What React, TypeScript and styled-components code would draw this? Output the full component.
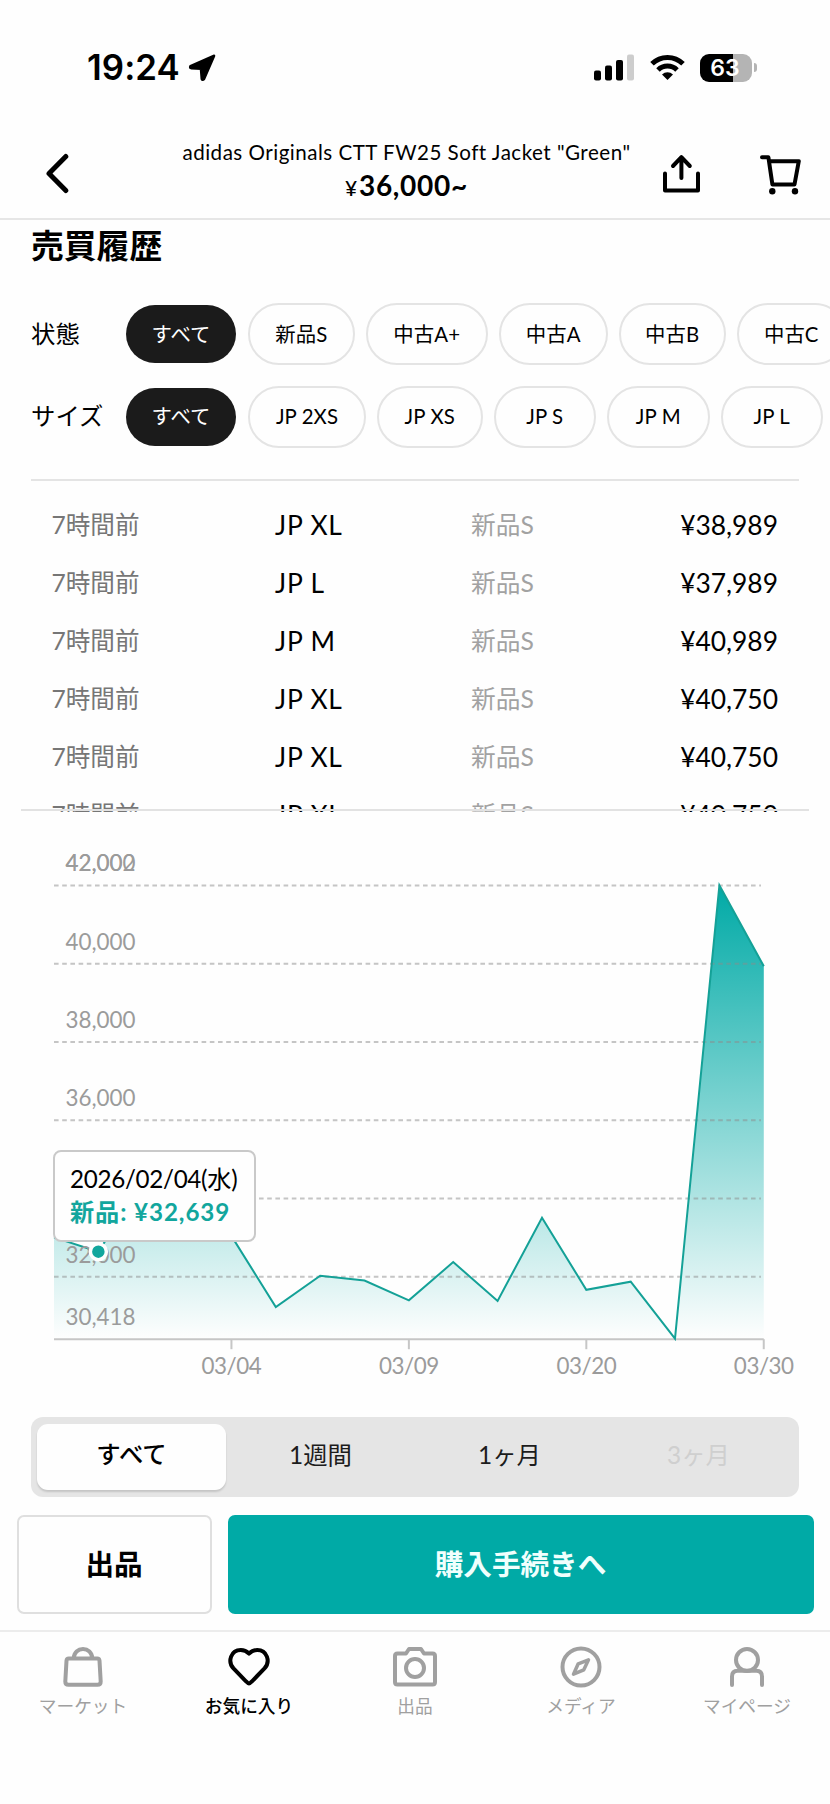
import React from "react";
import styled, { createGlobalStyle, css } from "styled-components";

const TEAL = "#00aaa6";
const GREY = "#9b9b9b";

const GlobalStyle = createGlobalStyle`
  * { box-sizing: border-box; }
  body {
    margin: 0;
    background: #fefefe;
    color: #000;
    font-family: Lato, "Noto Sans CJK JP", sans-serif;
  }
  button { font: inherit; color: inherit; background: none; border: 0; padding: 0; margin: 0; }
`;

const Screen = styled.div`
  width: 830px;
  height: 1804px;
  display: flex;
  flex-direction: column;
  overflow: hidden;
  background: #fefefe;
`;

/* Status bar */
const StatusBar = styled.div`
  height: 135px;
  flex: none;
  display: flex;
  align-items: center;
  justify-content: space-between;
  padding: 0 73px 0 87px;
`;
const Clock = styled.div`
  display: flex;
  align-items: center;
  gap: 8px;
  font: 600 34.8px/39px Inter, sans-serif;
  letter-spacing: 0.1px;
`;
const StatusIcons = styled.div`
  display: flex;
  align-items: center;
`;
const Signal = styled.svg` margin-right: 16px; `;
const Wifi = styled.svg` margin-right: 15px; `;
const Battery = styled.div`
  width: 52px;
  height: 28px;
  border-radius: 9px;
  background: linear-gradient(90deg, #000 63%, #b4b4b4 63%);
  color: #fff;
  font: 600 23px/29px Inter, sans-serif;
  text-align: center;
  padding-right: 2px;
`;
const BatteryCap = styled.div`
  width: 3px;
  height: 9px;
  margin-left: 2px;
  border-radius: 0 5px 5px 0;
  background: #b4b4b4;
`;

/* Header */
const Header = styled.header`
  height: 85px;
  flex: none;
  display: grid;
  grid-template-columns: 150px 512px 1fr;
  border-bottom: 2px solid #e6e6e6;
`;
const BackButton = styled.button`
  display: flex;
  align-items: flex-start;
  padding: 18px 0 0 44px;
`;
const HeaderText = styled.div`
  display: flex;
  flex-direction: column;
  align-items: center;
  padding: 4px 0 0 1px;
`;
const Title = styled.div`
  font-size: 20.6px;
  line-height: 26px;
  letter-spacing: 0.48px;
  white-space: nowrap;
`;
const Price = styled.div`
  display: flex;
  align-items: baseline;
  font-size: 28px;
  line-height: 40px;
  font-weight: 700;
  letter-spacing: 0.7px;
`;
const Yen = styled.span`
  font-size: 21px;
  font-weight: 500;
  margin-right: 1px;
`;
const HeaderActions = styled.div`
  display: flex;
  align-items: flex-start;
  padding-top: 19px;
  gap: 58px;
`;

/* Filters */
const SectionTitle = styled.h2`
  margin: 6px 0 0 31px;
  font-size: 32.8px;
  line-height: 40px;
  font-weight: 700;
  height: 38px;
  flex: none;
`;
const Filters = styled.div`
  margin-top: 39px;
  display: flex;
  flex-direction: column;
  gap: 20.5px;
  padding-left: 31px;
  flex: none;
`;
const FilterRow = styled.div`
  display: flex;
  align-items: center;
  height: 62px;
`;
const FilterLabel = styled.div`
  width: 95px;
  flex: none;
  font-size: 24.4px;
  line-height: 32px;
  padding-bottom: 1px;
`;
const Chips = styled.div`
  display: flex;
  align-items: center;
  gap: 11px;
  flex: none;
`;
const Chip = styled.button<{ $w: number; $active?: boolean }>`
  width: ${(p) => p.$w}px;
  height: 62px;
  flex: none;
  border: 2px solid #e4e4e4;
  border-radius: 31px;
  font-size: 20.4px;
  line-height: 30px;
  padding-bottom: 1px;
  letter-spacing: 0.1px;
  white-space: nowrap;
  ${(p) =>
    p.$active &&
    css`
      height: 58px;
      border: 0;
      border-radius: 29px;
      background: #1b1b1b;
      color: #fff;
      margin-right: 1px;
    `}
`;

/* History list */
const History = styled.div`
  margin: 31.5px 31px 0;
  height: 333px;
  flex: none;
  border-top: 2px solid #e4e4e4;
  padding-top: 15px;
  overflow: hidden;
`;
const HistoryRow = styled.div`
  display: grid;
  grid-template-columns: 223.5px 196px 1fr auto;
  height: 58px;
  align-items: center;
  padding: 0 21px 0 20.5px;
  font-size: 26.4px;
  line-height: 58px;
`;
const When = styled.span`
  font-size: 24.6px;
  color: #767676;
`;
const Size = styled.span`
  letter-spacing: 0.8px;
`;
const Condition = styled.span`
  font-size: 24.7px;
  color: #a2a2a2;
`;
const Amount = styled.span`
  text-align: right;
`;
const ListEdge = styled.div`
  height: 2px;
  flex: none;
  margin: -3px 21px 0;
  background: #e2e2e2;
  position: relative;
`;

/* Chart */
const ChartBox = styled.div`
  position: relative;
  height: 606px;
  flex: none;
`;
const ChartSvg = styled.svg`
  display: block;
`;
const ChartText = styled.text`
  font-size: 22.4px;
  fill: ${GREY};
`;
const TickText = styled(ChartText)`
  letter-spacing: -0.45px;
`;
const Tooltip = styled.div`
  position: absolute;
  left: 53px;
  top: 339px;
  width: 203px;
  height: 92px;
  border: 2px solid #c9c9c9;
  border-radius: 8px;
  background: #fefefe;
  padding: 10px 0 0 15px;
  font-size: 24.2px;
  line-height: 33px;
  letter-spacing: -0.3px;
  white-space: nowrap;
`;
const TooltipValue = styled.div`
  color: #12a69d;
  font-weight: 700;
  letter-spacing: 0.9px;
`;

/* Range selector */
const Segments = styled.div`
  margin: 0 31px;
  height: 80px;
  flex: none;
  border-radius: 12px;
  background: #e5e5e5;
  padding: 7px 6px;
  display: grid;
  grid-template-columns: repeat(4, 1fr);
`;
const Segment = styled.button<{ $state?: "on" | "off" }>`
  font-size: 24.4px;
  line-height: 62px;
  height: 66px;
  padding-bottom: 4px;
  border-radius: 11px;
  color: #1c1c1c;
  ${(p) =>
    p.$state === "on" &&
    css`
      background: #fefefe;
      font-weight: 500;
      color: #000;
      line-height: 60px;
      padding-bottom: 6px;
      box-shadow: 0 2px 2px rgba(0, 0, 0, 0.14);
    `}
  ${(p) => p.$state === "off" && css` color: #cfcfcf; `}
`;

/* Bottom actions */
const Actions = styled.div`
  display: grid;
  grid-template-columns: 195px 586px;
  gap: 16px;
  padding: 18px 0 0 17px;
  flex: none;
`;
const ActionButton = styled.button<{ $primary?: boolean }>`
  height: 99px;
  border-radius: 7px;
  border: 2px solid #dfdfdf;
  font-size: 28.6px;
  font-weight: 700;
  line-height: 92px;
  padding: 0 1px 2px 0;
  ${(p) =>
    p.$primary &&
    css`
      border-color: ${TEAL};
      background: ${TEAL};
      color: #f0fffd;
    `}
`;

/* Tab bar */
const TabBar = styled.nav`
  margin-top: 16px;
  border-top: 2px solid #ececec;
  display: grid;
  grid-template-columns: repeat(5, 166px);
  flex: none;
`;
const Tab = styled.button<{ $active?: boolean }>`
  display: flex;
  flex-direction: column;
  align-items: center;
  padding-top: 14px;
  gap: 6px;
  font-size: 17.7px;
  line-height: 26px;
  color: ${(p) => (p.$active ? "#000" : "#a0a0a0")};
  font-weight: ${(p) => (p.$active ? 500 : 400)};
`;

const conditions = [
  { label: "新品S", w: 106.5 },
  { label: "中古A+", w: 122.5 },
  { label: "中古A", w: 108.5 },
  { label: "中古B", w: 107.5 },
  { label: "中古C", w: 108.5 },
];
const sizes = [
  { label: "JP 2XS", w: 118 },
  { label: "JP XS", w: 105.5 },
  { label: "JP S", w: 102.5 },
  { label: "JP M", w: 102.5 },
  { label: "JP L", w: 102.5 },
];
const sales = [
  ["JP XL", "¥38,989"],
  ["JP L", "¥37,989"],
  ["JP M", "¥40,989"],
  ["JP XL", "¥40,750"],
  ["JP XL", "¥40,750"],
  ["JP XL", "¥40,750"],
];

/* Chart geometry, relative to the top of the chart box */
const X0 = 54;
const STEP = 44.36;
const AXIS = 528.2;
const BASE = 527.6;
const MIN = 30418;
const PX_PER_YEN = 78.25 / 2000;
const yOf = (v: number) => BASE - (v - MIN) * PX_PER_YEN;
const values = [
  33005, 32639, 34430, 34400, 33044, 31226, 32024, 31900, 31396, 32373, 31382,
  33505, 31665, 31873, 30418, 42002, 39936,
];
const points = values.map((v, i) => `${(X0 + i * STEP).toFixed(1)},${yOf(v).toFixed(1)}`);
const XMAX = X0 + 16 * STEP;
const grid = [42000, 40000, 38000, 36000, 34000, 32000];
const ticks: [number, string][] = [[4, "03/04"], [8, "03/09"], [12, "03/20"], [16, "03/30"]];

function PriceChart() {
  return (
    <ChartBox>
      <ChartSvg width="830" height="606" viewBox="0 0 830 606">
        <defs>
          <linearGradient id="area" gradientUnits="userSpaceOnUse" x1="0" y1="74" x2="0" y2={AXIS}>
            <stop offset="0" stopColor={TEAL} />
            <stop offset="1" stopColor={TEAL} stopOpacity="0" />
          </linearGradient>
        </defs>
        <polygon points={`${X0},${AXIS} ${points.join(" ")} ${XMAX},${AXIS}`} fill="url(#area)" />
        {grid.map((v) => (
          <line key={v} x1={X0} x2="761" y1={yOf(v)} y2={yOf(v)} stroke="#8c8c8c" strokeOpacity="0.5" strokeWidth="2" strokeDasharray="4.6 3.6" />
        ))}
        <path d={`M${X0} ${AXIS}H${XMAX}`} stroke="#c6c6c6" strokeWidth="2" />
        {ticks.map(([i, t]) => (
          <g key={t}>
            <path d={`M${X0 + i * STEP} ${AXIS}v10`} stroke="#c6c6c6" strokeWidth="2" />
            <TickText x={X0 + i * STEP} y={AXIS + 35} textAnchor="middle">{t}</TickText>
          </g>
        ))}
        <polyline points={points.join(" ")} fill="none" stroke="#14a197" strokeWidth="2" />
        {[42002, ...grid, MIN].map((v) => (
          <ChartText key={v} x="65.5" y={yOf(v) - 14}>{v.toLocaleString("en-US")}</ChartText>
        ))}
        <circle cx={X0 + STEP} cy={yOf(32639)} r="8" fill="#12a69d" stroke="#fefefe" strokeWidth="3.5" />
      </ChartSvg>
      <Tooltip>
        <div>2026/02/04(水)</div>
        <TooltipValue>新品: ¥32,639</TooltipValue>
      </Tooltip>
    </ChartBox>
  );
}

const tabIcon = { width: 42, height: 42, viewBox: "0 0 42 42", fill: "none", stroke: "currentColor", strokeWidth: 4, strokeLinecap: "round", strokeLinejoin: "round" } as const;

export default function App() {
  return (
    <Screen>
      <GlobalStyle />
      <StatusBar>
        <Clock>
          19:24
          <svg width="29" height="28" viewBox="0 0 29 28">
            <path d="M25.8 2 2.6 12.4Q2 13.6 3.2 13.9L13.2 14.6 14 24.8Q14.6 26.2 15.8 25Z" fill="#000" stroke="#000" strokeWidth="3" strokeLinejoin="round" />
          </svg>
        </Clock>
        <StatusIcons>
          <Signal width="40" height="27" viewBox="0 0 40 27">
            <rect x="0" y="16.5" width="7" height="10" rx="2" />
            <rect x="11" y="11.5" width="7" height="15" rx="2" />
            <rect x="22" y="6" width="7" height="20.5" rx="2" />
            <rect x="33" y="0.5" width="7" height="26" rx="2" fill="#cdcdcd" />
          </Signal>
          <Wifi width="35" height="27" viewBox="0 0 35 27" fill="none" stroke="#000" strokeWidth="5">
            <path d="M2 9.8A22 22 0 0 1 33 9.8" />
            <path d="M8 16A13.5 13.5 0 0 1 27 16" />
            <path d="M17.5 26 12 20.5A8 8 0 0 1 23 20.5Z" fill="#000" stroke="none" />
          </Wifi>
          <Battery>63</Battery>
          <BatteryCap />
        </StatusIcons>
      </StatusBar>

      <Header>
        <BackButton>
          <svg width="26" height="41" viewBox="0 0 26 41" fill="none" stroke="#000" strokeWidth="5" strokeLinecap="round" strokeLinejoin="round">
            <path d="M21.8 3.5 5 20.5 21.8 37.5" />
          </svg>
        </BackButton>
        <HeaderText>
          <Title>adidas Originals CTT FW25 Soft Jacket "Green"</Title>
          <Price><Yen>¥</Yen>36,000~</Price>
        </HeaderText>
        <HeaderActions>
          <svg width="38" height="40" viewBox="0 0 38 40" fill="none" stroke="#000" strokeWidth="4" strokeLinecap="round" strokeLinejoin="round">
            <path d="M3 19.5V36.5H36V19.5M19.4 24V4M11 12 19.4 3.2 27.8 12" />
          </svg>
          <svg width="44" height="42" viewBox="0 0 44 42" fill="none" stroke="#000" strokeWidth="4" strokeLinecap="round" strokeLinejoin="round">
            <path d="M4 3.2H10.4L14.4 30.5H36.5L40.8 7.2H11" />
            <circle cx="14.3" cy="37.2" r="3.2" fill="#000" stroke="none" />
            <circle cx="37" cy="37.2" r="3.2" fill="#000" stroke="none" />
          </svg>
        </HeaderActions>
      </Header>

      <SectionTitle>売買履歴</SectionTitle>
      <Filters>
        <FilterRow>
          <FilterLabel>状態</FilterLabel>
          <Chips>
            <Chip $w={110} $active>すべて</Chip>
            {conditions.map((c) => <Chip key={c.label} $w={c.w}>{c.label}</Chip>)}
          </Chips>
        </FilterRow>
        <FilterRow>
          <FilterLabel>サイズ</FilterLabel>
          <Chips>
            <Chip $w={110} $active>すべて</Chip>
            {sizes.map((c) => <Chip key={c.label} $w={c.w}>{c.label}</Chip>)}
          </Chips>
        </FilterRow>
      </Filters>

      <History>
        {sales.map(([size, price], i) => (
          <HistoryRow key={i}>
            <When>7時間前</When>
            <Size>{size}</Size>
            <Condition>新品S</Condition>
            <Amount>{price}</Amount>
          </HistoryRow>
        ))}
      </History>
      <ListEdge />

      <PriceChart />

      <Segments>
        <Segment $state="on">すべて</Segment>
        <Segment>1週間</Segment>
        <Segment>1ヶ月</Segment>
        <Segment $state="off">3ヶ月</Segment>
      </Segments>

      <Actions>
        <ActionButton>出品</ActionButton>
        <ActionButton $primary>購入手続きへ</ActionButton>
      </Actions>

      <TabBar>
        <Tab>
          <svg {...tabIcon}>
            <path d="M6.8 12.5H35.2Q37.3 12.5 37.5 14.6L38.7 35.5Q38.7 38.8 35.5 38.8H6.5Q3.3 38.8 3.3 35.5L4.5 14.6Q4.7 12.5 6.8 12.5ZM11.8 12C12 6.5 16 3 21 3S30 6.5 30.2 12" />
          </svg>
          マーケット
        </Tab>
        <Tab $active>
          <svg {...tabIcon}>
            <path d="M21 37.5C20 37.5 18.9 36.2 17.5 34.8L5.5 22.4C-0.8 15.5 3 4 12.8 4C16.5 4 19 5.6 21 7.6C23 5.6 25.5 4 29.2 4C39 4 42.8 15.5 36.5 22.4L24.5 34.8C23.1 36.2 22 37.5 21 37.5Z" />
          </svg>
          お気に入り
        </Tab>
        <Tab>
          <svg {...tabIcon} width={46} viewBox="0 0 46 42">
            <path d="M5.5 7.5H14L17 3H29L32 7.5H40.5Q43 7.5 43 10V36Q43 38.5 40.5 38.5H5.5Q3 38.5 3 36V10Q3 7.5 5.5 7.5Z" />
            <circle cx="23" cy="22" r="9" />
          </svg>
          出品
        </Tab>
        <Tab>
          <svg {...tabIcon}>
            <circle cx="21" cy="21" r="18.5" />
            <path d="M28.5 13.8 18.2 17.8 13.5 28.2 23.8 23.8Z" strokeWidth="3.5" />
          </svg>
          メディア
        </Tab>
        <Tab>
          <svg {...tabIcon}>
            <circle cx="21" cy="14" r="11" />
            <path d="M6 39V30.5Q6 24.8 11.7 24.8H30.3Q36 24.8 36 30.5V39" />
          </svg>
          マイページ
        </Tab>
      </TabBar>
    </Screen>
  );
}
